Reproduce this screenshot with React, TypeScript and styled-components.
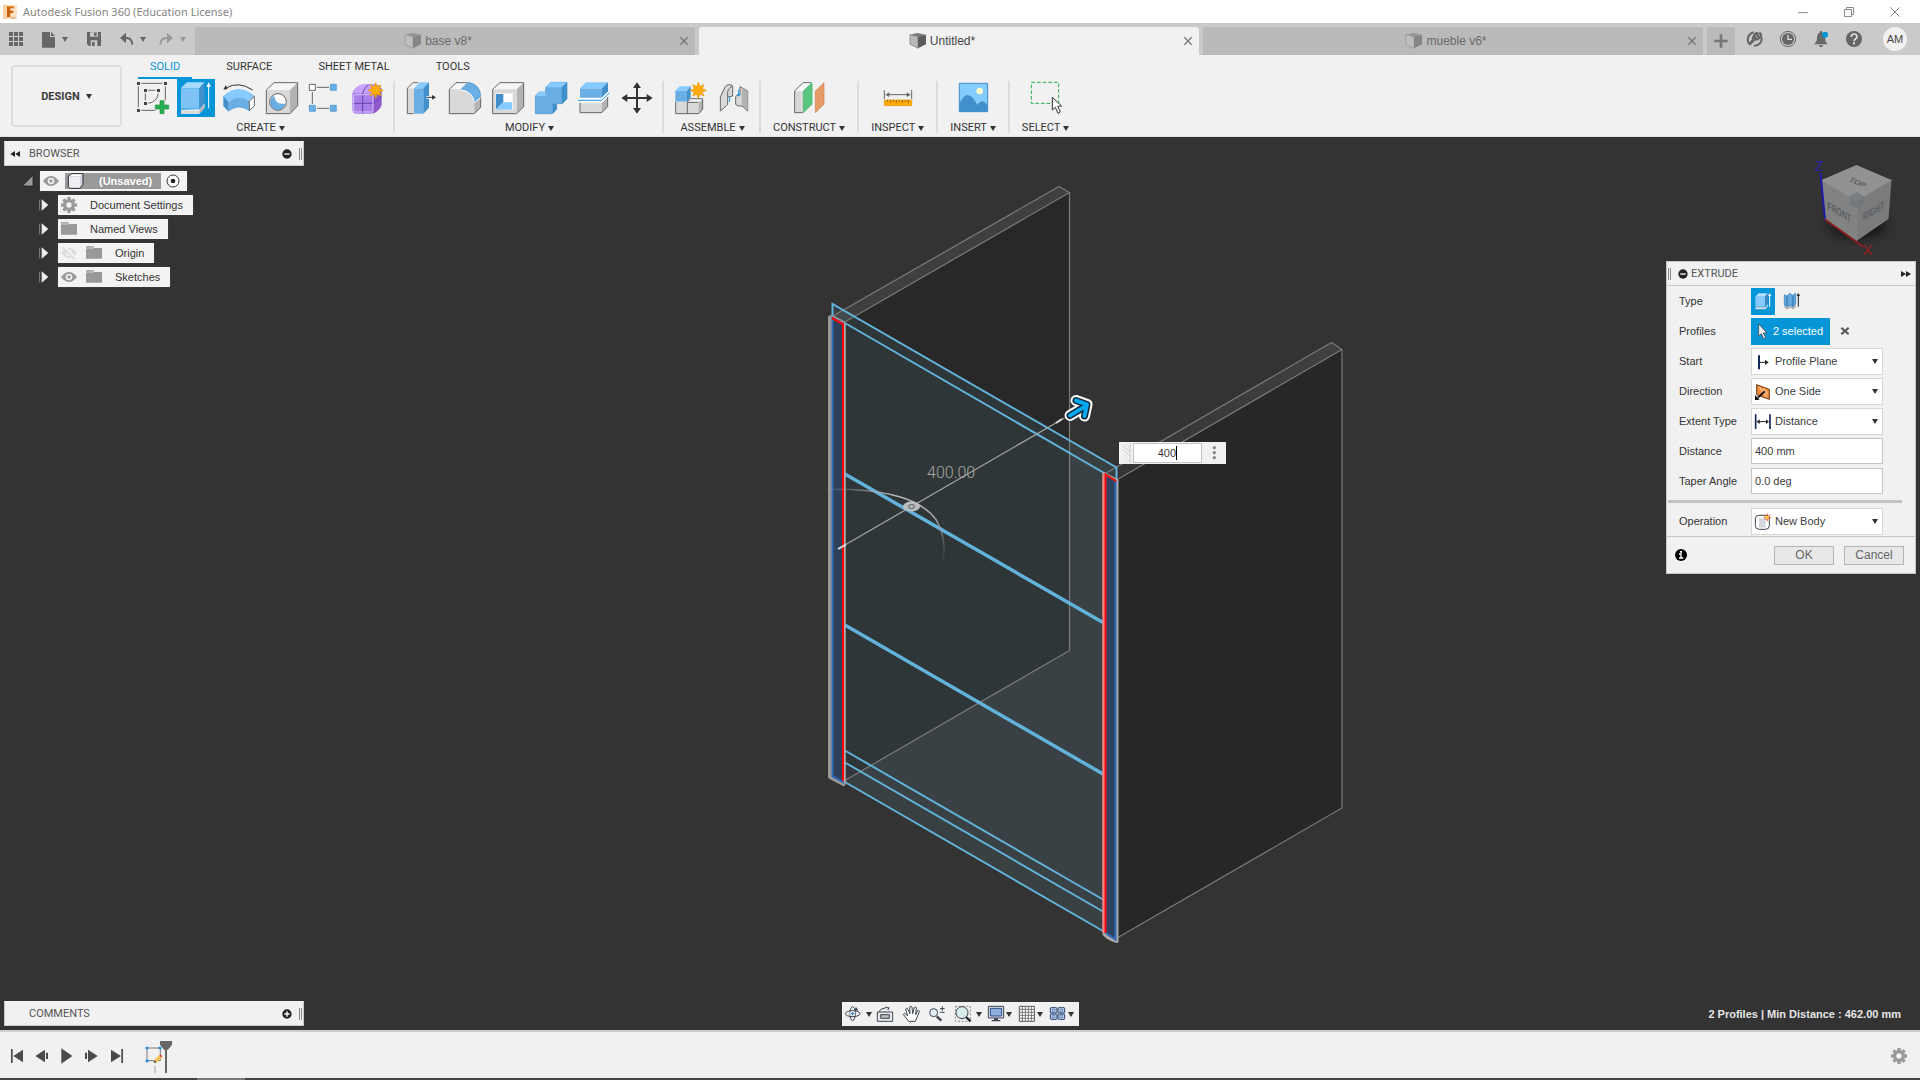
import React, { useState } from "react";
import styled, { createGlobalStyle } from "styled-components";

const SANS = '"Liberation Sans", Arial, sans-serif';
const CAPS = 'Roboto, "Liberation Sans", sans-serif';

const BLUE = "#0696d7";
const INK = "#3c3c3c";

const GlobalStyle = createGlobalStyle`
  * { box-sizing: border-box; }
  html, body { margin: 0; height: 100%; background: #333; }
  body { font: 11px/16px ${SANS}; color: ${INK}; }
  button, input, select { font: inherit; color: inherit; }
  button { border: 0; padding: 0; background: none; display: inline-flex; align-items: center; justify-content: center; }
  svg { display: block; flex: none; }
  input:focus, select:focus { outline: none; }
`;

const Shell = styled.div`
  display: flex;
  flex-direction: column;
  min-height: 100vh;
`;

/* ---------- icon helpers: drawings use three units per pixel ---------- */

type Box = [number, number, number, number];

function Art({ box, children }: { box: Box; children: React.ReactNode }) {
  return (
    <svg width={box[2] / 3} height={box[3] / 3} viewBox={box.join(" ")} fill="none" aria-hidden="true">
      {children}
    </svg>
  );
}

function Star({ x, y, r }: { x: number; y: number; r: number }) {
  const pts = Array.from({ length: 16 }, (_, i) => {
    const a = (Math.PI * i) / 8;
    const d = i % 2 ? r * 0.52 : r;
    return `${(x + d * Math.sin(a)).toFixed(1)},${(y - d * Math.cos(a)).toFixed(1)}`;
  }).join(" ");
  return <polygon points={pts} fill="#ffab00" stroke="#e39400" strokeWidth="2" />;
}

const Caret = styled.span<{ $tone?: string }>`
  flex: none;
  width: 0;
  height: 0;
  border: 3px solid transparent;
  border-top: 5px solid ${(p) => p.$tone || "#333"};
  border-bottom: 0;
`;

const Q = "#666";

/* ---------- title bar ---------- */

const TitleBar = styled.header`
  display: flex;
  align-items: center;
  height: 23px;
  background: #fff;
  padding: 0 2px;
`;
const TitleText = styled.h1`
  flex: 1;
  margin: 0 0 0 5px;
  font: 400 11px/22px "Noto Sans", "Open Sans", sans-serif;
  color: #858585;
`;
const WindowButton = styled.button`
  width: 46px;
  height: 20px;
`;

/* ---------- document tabs ---------- */

const DocBar = styled.nav`
  display: flex;
  height: 32px;
  background: #cacaca;
`;
const QuickAccess = styled.div`
  display: flex;
  align-items: center;
  width: 195px;
  padding-left: 8px;
`;
const QuickButton = styled.button<{ $lead?: number }>`
  gap: 6px;
  margin-left: ${(p) => p.$lead || 0}px;
`;
const Tabs = styled.div`
  flex: 1;
  display: flex;
  gap: 4px;
  padding-top: 4px;
`;
const Tab = styled.div<{ $active?: boolean }>`
  flex: 1;
  display: flex;
  align-items: center;
  padding: 0 4px;
  border-radius: 3px 3px 0 0;
  background: ${(p) => (p.$active ? "#f1f1f1" : "#bababa")};
  color: ${(p) => (p.$active ? "#444" : "#6a6a6a")};
`;
const TabTitle = styled.button`
  flex: 1;
  gap: 3px;
  font-size: 12px;
  line-height: 28px;
`;
const TabClose = styled.button`
  width: 14px;
  height: 28px;
`;
const AddTab = styled.button`
  width: 28px;
  margin: 4px 0 0 4px;
  border-radius: 3px 3px 0 0;
  background: #bababa;
`;
const Account = styled.div`
  display: flex;
  align-items: center;
  gap: 15px;
  padding: 0 13px 0 11px;
`;
const Avatar = styled.button`
  width: 24px;
  height: 24px;
  margin-left: 5px;
  border-radius: 50%;
  background: #f1f1f1;
  color: #444;
`;

/* ---------- ribbon ---------- */

const Ribbon = styled.section`
  display: flex;
  height: 82px;
  background: #f1f1f1;
  border-bottom: 1px solid #dfe3e3;
`;
const Workspace = styled.button`
  width: 111px;
  height: 62px;
  margin: 10px 12px 0 11px;
  padding-top: 1px;
  gap: 6px;
  border: 2px solid #dedede;
  border-radius: 4px;
  font: 700 11px/16px ${CAPS};
`;
const RibbonBody = styled.div`
  flex: 1;
  display: flex;
  flex-direction: column;
`;
const RibbonTabs = styled.div`
  display: flex;
  gap: 22px;
  height: 24px;
  padding-left: 4px;
`;
const RibbonTab = styled.button<{ $active?: boolean }>`
  padding: 2px 12px 0;
  font: 11px/20px ${CAPS};
  border-bottom: 2px solid ${(p) => (p.$active ? BLUE : "transparent")};
  color: ${(p) => (p.$active ? BLUE : "#333")};
`;
const Groups = styled.div`
  display: flex;
`;
const Group = styled.div<{ $tight?: boolean }>`
  display: flex;
  flex-direction: column;
  align-items: center;
  padding: ${(p) => (p.$tight ? "0 14px 0 12px" : "0 8px")};
  &:first-child { padding-left: 0; }
  background: linear-gradient(#dcdcdc, #dcdcdc) right 2px / 2px 52px no-repeat;
  &:last-child { background: none; }
`;
const Tools = styled.div`
  display: flex;
  gap: 5px;
`;
const Tool = styled.button<{ $on?: boolean }>`
  width: 38px;
  height: 38px;
  background: ${(p) => (p.$on ? BLUE : "none")};
`;
const GroupMenu = styled.button`
  gap: 3px;
  padding-top: 3px;
  font: 11px/16px ${CAPS};
  color: #333;
`;

const L = "#86caff";
const M = "#69afe5";
const D = "#4190cc";
const G = "#d9d9d9";
const S = "#b3b3b3";
const E = "#666";

interface ToolDef { name: string; on?: boolean; x: number; art: React.ReactNode }
interface GroupDef { name: string; tight?: boolean; tools: ToolDef[] }

const GROUPS: GroupDef[] = [
  {
    name: "CREATE",
    tools: [
      { name: "Create Sketch", x: 402, art: (
        <>
          <path d="M424 250h63M415 259v63M496 259v42M424 331h42M445 271h21M436 280v21M475 280q-4 26-30 30" stroke={E} strokeWidth="3" />
          <path d="M411 246h9v9h-9zM492 246h9v9h-9zM411 327h9v9h-9zM432 267h9v9h-9zM471 267h9v9h-9zM432 306h9v9h-9z" fill="#444" />
          <path d="M480 302h12v13h14v12h-14v14h-12v-14h-14v-12h14z" fill="#27ae51" stroke="#1e9443" strokeWidth="2" />
        </>) },
      { name: "Extrude", on: true, x: 531, art: (
        <>
          <path d="M543 329v12h55l16-18v-13l-16 18z" fill="#fff" />
          <path d="M598 329l16-18v12l-16 18z" fill={S} />
          <path d="M543 331h55v10h-55z" fill={G} />
          <path d="M543 265h55v61h-55z" fill="#7fc2f5" />
          <path d="M543 265l17-18h54l-16 18z" fill="#a5dbff" />
          <path d="M598 265l16-18v62l-16 17z" fill={D} />
          <path d="M626 325v-68" stroke="#fff" strokeWidth="3" />
          <path d="M626 247l7 13h-14z" fill="#fff" />
        </>) },
      { name: "Revolve", x: 660, art: (
        <>
          <path d="M670 288q45-42 94 0l-16 15q-31-22-62 3z" fill={L} />
          <path d="M670 288l16 18v29l-16-17z" fill={D} />
          <path d="M686 306q31-25 62-3v30q-31-22-62 2z" fill={M} />
          <path d="M748 303l15-14v29l-15 14z" fill="#fff" stroke={E} strokeWidth="3" />
          <path d="M678 264q38-22 80 6" stroke="#333" strokeWidth="3" />
          <path d="M670 269l7-13 6 11z" fill="#333" />
        </>) },
      { name: "Hole", x: 789, art: (
        <>
          <path d="M799 270l23-22h71l-23 22z" fill="#f6f6f6" />
          <path d="M870 270l23-22v69l-23 24z" fill={S} />
          <path d="M799 270h71v71h-71z" fill={G} />
          <path d="M799 270l23-22h71v69l-23 24h-71z" stroke={E} strokeWidth="3" />
          <circle cx="834" cy="306" r="25" fill="#fff" stroke={E} strokeWidth="3" />
          <path d="M823 289a21 21 0 1 0 31 22q-28 4-31-22z" fill={M} />
          <path d="M823 289a21 21 0 1 0 31 22" stroke={D} strokeWidth="2" />
        </>) },
      { name: "Pattern", x: 918, art: (
        <>
          <path d="M951 262h36M937 276v36M951 325h36" stroke={E} strokeWidth="3" />
          <path d="M928 253h18v18h-18z" fill="#fff" stroke={E} strokeWidth="3" />
          <path d="M991 253h18v18h-18zM928 316h18v18h-18zM991 316h18v18h-18z" fill={M} stroke={D} strokeWidth="2" />
        </>) },
      { name: "Create Form", x: 1047, art: (
        <>
          <path d="M1057 285q0-14 14-24 10-8 24-8h30q20 2 20 22v38q0 8-8 15-12 13-24 13h-44q-12 0-12-14z" fill="#a87ee9" />
          <path d="M1059 278q6-14 18-20 6-5 16-5h30q12 1 18 10l-22 17h-40z" fill="#c9a2fb" />
          <path d="M1120 280l24-16v50q-2 14-24 27z" fill="#8f5acb" />
          <path d="M1058 310h62l24-20M1088 280v61M1088 280q4-16 18-26" stroke="#6a3fae" strokeWidth="3" />
          <path d="M1066 284h48q5 0 5 5v42q0 5-5 5h-48q-5 0-5-5v-42q0-5 5-5z" stroke="#d7c0f8" strokeWidth="3" />
          <Star x={1127} y={271} r={23} />
        </>) },
    ],
  },
  {
    name: "MODIFY",
    tools: [
      { name: "Press Pull", x: 69, art: (
        <>
          <path d="M82 265l17-17h18l-15 17v76h-20z" fill="#f6f6f6" />
          <path d="M82 265h20v76h-20z" fill={G} />
          <path d="M100 341h-18v-76l17-17h16" stroke={E} strokeWidth="3" />
          <path d="M102 265h28v76h-28z" fill={M} />
          <path d="M102 265l17-18h28l-17 18z" fill={L} />
          <path d="M130 265l17-18v76l-17 18z" fill={D} />
          <path d="M139 292h21" stroke="#fff" strokeWidth="8" />
          <path d="M139 292h21" stroke="#333" strokeWidth="3" />
          <path d="M168 292l-12 7v-14z" fill="#333" />
        </>) },
      { name: "Fillet", x: 198, art: (
        <>
          <path d="M208 268l20-20h34l-20 20z" fill="#f6f6f6" />
          <path d="M208 268h34q38 4 41 40v33h-75z" fill={G} />
          <path d="M283 308l19-16v30l-19 19z" fill={S} />
          <path d="M244 267l21-20q36 6 37 43l-19 17q-3-34-39-40z" fill={M} stroke={D} strokeWidth="2" />
          <path d="M262 248h-34l-20 20v73h75l19-19v-30" stroke={E} strokeWidth="3" />
          <path d="M242 270q38 4 41 38l19-15" stroke="#fff" strokeWidth="3" />
        </>) },
      { name: "Shell", x: 327, art: (
        <>
          <path d="M338 268l22-20h71l-21 20z" fill="#f6f6f6" />
          <path d="M410 268l21-20v72l-21 21z" fill={S} />
          <path d="M338 268h72v73h-72z" fill={G} />
          <path d="M338 268l22-20h71v72l-21 21h-72z" stroke={E} strokeWidth="3" />
          <path d="M347 280h51v50h-51z" fill="#fff" />
          <path d="M348 282h22v25l-22 21z" fill={D} />
          <path d="M348 329l22-22h26v22z" fill={L} />
        </>) },
      { name: "Combine", x: 456, art: (
        <>
          <path d="M466 288l12-12h19v-14l15-15h49v49l-14 15h-17v17l-13 13h-51z" fill={M} stroke={D} strokeWidth="2" />
          <path d="M466 288l12-12h19v12zM497 262l15-15h49l-16 15z" fill={L} />
          <path d="M545 262l16-15v49l-14 15h-2zM518 311h12v17l-12 13z" fill={D} />
        </>) },
      { name: "Split Body", x: 585, art: (
        <>
          <path d="M600 265h65v28h-65z" fill={M} />
          <path d="M600 265l18-18h66l-19 18z" fill={L} />
          <path d="M665 265l19-18v27l-19 19z" fill={D} />
          <path d="M600 310h65v28h-65z" fill={G} />
          <path d="M665 310l18-18v28l-18 18z" fill={S} />
          <path d="M600 308v30h65l18-18v-30" stroke={E} strokeWidth="3" />
          <path d="M594 301h71l24-23" stroke="#fff" strokeWidth="10" />
          <path d="M594 301h71l24-23" stroke="#1b94ea" strokeWidth="3" />
        </>) },
      { name: "Move", x: 714, art: (
        <path d="M771 247l12 17h-9v27h26v-9l18 12-18 12v-9h-26v27h9l-12 17-12-17h9v-27h-26v9l-18-12 18-12v9h26v-27h-9z" fill="#333" />
      ) },
    ],
  },
  {
    name: "ASSEMBLE",
    tools: [
      { name: "New Component", x: 876, art: (
        <>
          <path d="M887 307h69v34h-69z" fill={G} />
          <path d="M922 306l10-10h36l-12 12z" fill="#f6f6f6" />
          <path d="M956 308l12-12v32l-12 13z" fill={S} />
          <path d="M887 306v35h69l12-13v-32h-36l-10 10v35M922 307h34" stroke={E} strokeWidth="3" />
          <path d="M886 272h35v33h-35z" fill={M} />
          <path d="M886 272l13-13h33l-11 13z" fill={L} />
          <path d="M921 272l11-13v33l-11 13z" fill={D} />
          <Star x={955} y={271} r={24} />
        </>) },
      { name: "Joint", x: 1005, art: (
        <>
          <path d="M1021 291l15-32q8-8 19-4 4 3 3 10v23l-11 3-4-2v25l-22 19z" fill={G} stroke={E} strokeWidth="3" />
          <path d="M1043 289v-15q4-10 14-16" stroke={E} strokeWidth="3" />
          <path d="M1103 333l-17-15q-18 1-19-6v-22q3-7 13-6v-24l23 13z" fill={G} stroke={E} strokeWidth="3" />
          <path d="M1085 262v54l18 15v-56z" fill={S} />
          <path d="M1049 306v-16M1076 268v18" stroke="#1b94ea" strokeWidth="3" />
          <path d="M1076 290l-6-8h12z" fill="#1b94ea" />
        </>) },
    ],
  },
  {
    name: "CONSTRUCT",
    tight: true,
    tools: [
      { name: "Offset Plane", x: 1233, art: (
        <>
          <path d="M1247 273l25-25h26l-25 25z" fill="#fafafa" />
          <path d="M1247 273h26v65h-26z" fill={G} />
          <path d="M1271 338h-24v-65l25-25h24" stroke={E} strokeWidth="3" />
          <path d="M1273 273l26-25v65l-26 25z" fill="#59c67f" stroke="#42ae68" strokeWidth="2" />
          <path d="M1309 273l26-25v65l-26 25z" fill="#e69a66" stroke="#cf8350" strokeWidth="2" />
        </>) },
    ],
  },
  {
    name: "INSPECT",
    tight: true,
    tools: [
      { name: "Measure", x: 360, art: (
        <>
          <path d="M376 270v27M458 270v27M384 284h66" stroke={E} strokeWidth="3" />
          <path d="M379 284l12-7v14zM455 284l-12-7v14z" fill={E} />
          <path d="M376 300h82v17h-82z" fill="#ffab00" stroke="#e69500" strokeWidth="2" />
          <path d="M385 301v4M394 301v7M403 301v4M412 301v7M421 301v4M430 301v7M439 301v4M448 301v7" stroke="#7a5200" strokeWidth="3" />
        </>) },
    ],
  },
  {
    name: "INSERT",
    tight: true,
    tools: [
      { name: "Insert Image", x: 579, art: (
        <>
          <path d="M595 250h85v85h-85z" fill="#84ccff" stroke={D} strokeWidth="3" />
          <path d="M595 310q14-25 25-25 14 0 29 30 8-12 17-11 6 1 14 14v17h-85z" fill={D} />
          <circle cx="656" cy="273" r="10" fill="#fdfbd0" />
        </>) },
    ],
  },
  {
    name: "SELECT",
    tight: true,
    tools: [
      { name: "Select", x: 795, art: (
        <>
          <path d="M808 247h82v63h-82z" stroke="#27ae51" strokeWidth="3" strokeDasharray="11 6" />
          <path d="M871 292v38l9-8 8 18 7-4-8-17 12-1z" fill="#fff" stroke="#333" strokeWidth="3" />
        </>) },
    ],
  },
];

/* ---------- viewport ---------- */

const Viewport = styled.main`
  position: relative;
  flex: 1;
  display: flex;
  justify-content: space-between;
  background: #333;
  padding: 4px;
  overflow: hidden;
`;
const Canvas = styled.div`
  position: absolute;
  inset: 0;
  display: flex;
  align-items: center;
  justify-content: center;
`;
const Column = styled.div<{ $end?: boolean }>`
  position: relative;
  display: flex;
  flex-direction: column;
  flex: 1 1 0;
  align-items: ${(p) => (p.$end ? "flex-end" : "flex-start")};
`;
const Spacer = styled.div`
  flex: 1;
`;
const Dock = styled.div`
  display: flex;
  align-items: center;
  width: 300px;
  height: 25px;
  padding: 0 1px 0 4px;
  background: #f1f1f1;
  border: 1px solid #c9c9c9;
  border-top-color: #f1f1f1;
`;
const DockFold = styled.button`
  width: 12px;
  height: 20px;
`;
const DockTitle = styled.h2`
  flex: 1;
  margin: 0 0 0 8px;
  font: 400 11px/20px ${CAPS};
  color: #555;
`;
const Grip = styled.span`
  width: 3px;
  height: 12px;
  margin-left: 7px;
  border: 1px solid #888;
  border-width: 0 1px;
`;
const Tree = styled.ul`
  list-style: none;
  margin: 5px 0 0;
  padding: 0;
  display: grid;
  gap: 4px;
`;
const Node = styled.li<{ $depth: number }>`
  display: flex;
  align-items: center;
  gap: ${(p) => (p.$depth ? 8 : 6)}px;
  padding-left: ${(p) => (p.$depth ? 35 : 17)}px;
`;
const NodeBox = styled.div<{ $root?: boolean }>`
  display: flex;
  align-items: center;
  gap: ${(p) => (p.$root ? 5 : 7)}px;
  height: 20px;
  padding: 0 ${(p) => (p.$root ? 7 : 10)}px 0 2px;
  background: #f3f3f3;
  box-shadow: 0 0 3px #444;
`;
const NodeName = styled.span`
  padding-left: 5px;
  line-height: 20px;
  color: #333;
`;
const RootName = styled.span`
  display: flex;
  align-items: center;
  gap: 14px;
  height: 16px;
  padding: 0 9px 0 2px;
  background: #999;
  color: #fff;
  font-weight: 700;
`;
const NavBar = styled.div`
  position: relative;
  align-self: flex-end;
  display: flex;
  align-items: center;
  height: 24px;
  padding: 0 4px 0 2px;
  background: #f1f1f1;
`;
const NavButton = styled.button<{ $lead?: number; $gap?: number }>`
  gap: ${(p) => p.$gap || 0}px;
  margin-left: ${(p) => p.$lead || 0}px;
`;
const NavCaret = styled(Caret)`
  margin: 0 1px;
`;
const CubeSlot = styled.div`
  height: 120px;
  padding: 14px 13px 0 0;
`;
const StatusText = styled.p`
  margin: 0;
  padding: 0 15px 0 0;
  font-weight: 700;
  line-height: 24px;
  color: #e6e6e6;
`;
const FloatingInput = styled.div`
  position: absolute;
  left: calc(50% + 159px);
  top: calc(50% - 142px);
  display: flex;
  align-items: center;
  width: 107px;
  height: 22px;
  padding-left: 4px;
  background: #f1f1f1;
`;
const Stripes = styled.span`
  width: 8px;
  height: 20px;
  border-right: 2px solid #ddd;
  background: repeating-linear-gradient(45deg, #ddd 0 1px, #f1f1f1 1px 3px);
`;
const ValueShell = styled.div`
  display: flex;
  align-items: center;
  width: 69px;
  height: 20px;
  margin: 0 10px 0 2px;
  background: #fff;
  border: 1px solid #c2c2c2;
`;
const ValueInput = styled.input`
  width: 42px;
  padding: 0;
  border: 0;
  text-align: right;
  background: none;
`;
const TextCursor = styled.span`
  width: 1px;
  height: 14px;
  background: #000;
`;

/* ---------- extrude panel ---------- */

const Panel = styled.form`
  width: 250px;
  background: #f1f1f1;
  border: 1px solid #c6c6c6;
`;
const PanelHead = styled.div`
  display: flex;
  align-items: center;
  height: 24px;
  padding: 0 3px 0 1px;
  border-bottom: 1px solid #c6c6c6;
`;
const PanelGrip = styled(Grip)`
  margin: 0 7px 0 0;
`;
const PanelTitle = styled.h2`
  flex: 1;
  margin: 0 0 0 3px;
  font: 400 11px/22px ${CAPS};
  color: #555;
`;
const Row = styled.div`
  display: grid;
  grid-template-columns: 72px 132px;
  align-items: center;
  height: 30px;
  padding-left: 12px;
`;
const RowLabel = styled.label`
  color: #333;
`;
const Inline = styled.div`
  display: flex;
  align-items: center;
`;
const TypeButton = styled.button<{ $on?: boolean }>`
  width: 24px;
  height: 27px;
  margin-right: 5px;
  background: ${(p) => (p.$on ? BLUE : "none")};
`;
const Selection = styled.button`
  width: 79px;
  height: 27px;
  gap: 4px;
  margin-right: 8px;
  background: ${BLUE};
  color: #fff;
`;
const Field = styled.div`
  position: relative;
  height: 27px;
`;
const FieldIcon = styled.span`
  position: absolute;
  left: 3px;
  top: 5px;
  pointer-events: none;
`;
const FieldCaret = styled(Caret)`
  position: absolute;
  right: 5px;
  top: 11px;
  pointer-events: none;
`;
const Select = styled.select`
  appearance: none;
  width: 100%;
  height: 27px;
  padding: 0 16px 0 23px;
  border: 1px solid #d6d6d6;
  border-radius: 0;
  background: #fff;
`;
const TextField = styled.input`
  width: 100%;
  height: 26px;
  padding: 0 3px;
  border: 1px solid #c4c4c4;
  background: #fff;
`;
const Divider = styled.hr`
  margin: 4px 13px 3px 1px;
  height: 3px;
  border: 0;
  background: #c4c4c4;
`;
const PanelFoot = styled.div`
  display: flex;
  align-items: center;
  gap: 10px;
  height: 37px;
  padding: 0 11px 0 8px;
  border-top: 1px solid #c6c6c6;
`;
const FootButton = styled.button`
  width: 60px;
  height: 19px;
  border: 1px solid #b4b4b4;
  background: #e8e8e8;
  font-size: 12px;
  color: #666;
`;

/* ---------- timeline ---------- */

const Timeline = styled.footer`
  display: flex;
  align-items: center;
  height: 48px;
  padding: 2px 12px 0 4px;
  border-top: 2px solid #cdcdcd;
  background: #f1f1f1;
`;
const PlayButton = styled.button`
  width: 25px;
  height: 24px;
`;
const Feature = styled.button`
  margin: 2px auto 0 16px;
`;
const Edge = styled.div`
  height: 2px;
  background: linear-gradient(90deg, #444 197px, #777 197px 245px, #444 245px);
`;

/* ---------- small icons ---------- */

const DocCube = ({ dim }: { dim?: boolean }) => (
  <Art box={[441, 96, 54, 54]}>
    <g opacity={dim ? 0.55 : 1}>
      <path d="M444 104l22-5 26 5-24 6z" fill="#777" />
      <path d="M444 104l24 6v35l-24-12z" fill={dim ? "#c4c4c4" : "#b9b9b9"} stroke="#777" strokeWidth="2" />
      <path d="M468 110l24-6v29l-24 12z" fill="#5c5c5c" />
    </g>
  </Art>
);
const CloseGlyph = ({ tone = "#777" }: { tone?: string }) => (
  <Art box={[0, 0, 30, 30]}><path d="M4 4l22 22M26 4L4 26" stroke={tone} strokeWidth="4" /></Art>
);
const Folder = () => (
  <Art box={[180, 273, 54, 54]}><path d="M183 280h22l3 5h23v32h-48z" fill="#999" /><path d="M183 285h24" stroke="#f1f1f1" strokeWidth="2" /></Art>
);
const Eye = ({ off }: { off?: boolean }) => (
  <Art box={[180, 414, 54, 54]}>
    <g opacity={off ? 0.25 : 1}>
      <path d="M183 441q24-30 48 0-24 30-48 0z" fill="#999" />
      <circle cx="207" cy="441" r="10" fill="#f3f3f3" />
      <circle cx="207" cy="441" r="5" fill="#999" />
      {off && <><path d="M190 422l38 36" stroke="#f3f3f3" strokeWidth="10" /><path d="M187 424l38 36" stroke="#888" strokeWidth="4" /></>}
    </g>
  </Art>
);
const Gear = () => (
  <Art box={[-27, -27, 54, 54]}>
    {[0, 45, 90, 135].map((a) => (
      <path key={a} d="M-5-24H5V24H-5z" fill="#999" transform={`rotate(${a})`} />
    ))}
    <circle r="18" fill="#999" />
    <circle r="8" fill="#f3f3f3" />
  </Art>
);
const Dot = ({ sign }: { sign: "plus" | "minus" }) => (
  <Art box={[-15, -15, 30, 30]}>
    <circle r="14" fill="#222" />
    <path d={sign === "plus" ? "M-8 0H8M0-8V8" : "M-8 0H8"} stroke="#fff" strokeWidth="4" />
  </Art>
);
const Expander = () => (
  <Art box={[117, 204, 33, 42]}><path d="M119 209v32" stroke="#888" strokeWidth="3" /><path d="M125 208v34l20-17z" fill="#eee" /></Art>
);

function Quick() {
  return (
    <QuickAccess>
      <QuickButton aria-label="Data panel">
        <Art box={[24, 93, 48, 48]}>
          {[27, 42, 57].map((x) => [96, 111, 126].map((y) => <rect key={`${x}-${y}`} x={x} y={y} width="12" height="12" fill={Q} />))}
        </Art>
      </QuickButton>
      <QuickButton $lead={17} aria-label="File">
        <Art box={[123, 90, 45, 51]}><path d="M126 93h24v15h15v32h-39z" fill={Q} /><path d="M153 92l12 13h-12z" fill={Q} /></Art>
        <Caret $tone={Q} />
      </QuickButton>
      <QuickButton $lead={18} aria-label="Save">
        <Art box={[258, 93, 48, 48]}>
          <path d="M261 96h42v42h-36l-6-6z" fill={Q} />
          <path d="M270 97h24v13h-24zM272 121h20v17h-20z" fill="#cacaca" />
          <path d="M282 98h8v9h-8zM276 126h8v12h-8z" fill={Q} />
        </Art>
      </QuickButton>
      <QuickButton $lead={17} aria-label="Undo">
        <Art box={[357, 96, 45, 42]}><path d="M366 114h14q16 1 17 20" stroke={Q} strokeWidth="6" /><path d="M360 114l18-16v32z" fill={Q} /></Art>
        <Caret $tone={Q} />
      </QuickButton>
      <QuickButton $lead={13} aria-label="Redo">
        <Art box={[477, 96, 45, 42]}><path d="M512 114h-14q-16 1-17 20" stroke="#999" strokeWidth="6" /><path d="M519 114l-18-16v32z" fill="#999" /></Art>
        <Caret $tone="#999" />
      </QuickButton>
    </QuickAccess>
  );
}

const DOCS = ["base v8*", "Untitled*", "mueble v6*"];

function Model() {
  const edge = { stroke: "#7a7a7a", strokeWidth: 1.2 };
  const thin = { stroke: "#62b3db", strokeWidth: 2 };
  return (
    <svg width="1920" height="893" viewBox="0 137 1920 893" fill="none" role="img" aria-label="Model canvas">
      <defs>
        <linearGradient id="arcFade" x1="820" y1="489" x2="942" y2="560" gradientUnits="userSpaceOnUse">
          <stop offset="0" stopColor="#999" stopOpacity="0" />
          <stop offset="0.5" stopColor="#bbb" />
          <stop offset="0.8" stopColor="#aaa" />
          <stop offset="1" stopColor="#999" stopOpacity="0.1" />
        </linearGradient>
        <linearGradient id="topEdge" x1="1342" y1="342" x2="1106" y2="480" gradientUnits="userSpaceOnUse">
          <stop offset="0" stopColor="#414141" />
          <stop offset="1" stopColor="#333" />
        </linearGradient>
      </defs>
      <path d="M1069.5 192.5L844 322.5V781l225.5-130.5z" fill="#282828" />
      <path d="M1059 186.5l10.5 6L844 322.5 832 316.5z" fill="#3f3f3f" />
      <path d="M1116.5 480l226-130.5V808L1116.5 938z" fill="#272727" />
      <path d="M1331.5 342.5l11 7L1116.5 480 1105.5 473.5z" fill="url(#topEdge)" />
      <path d="M832.5 304L1116.5 467.5V480L1103 473.5V931L844 781.5V322.5L832.5 316.5z" fill="#6ab0b8" fillOpacity="0.11" />
      <path d="M1069.5 452.5l33.5 19.5v440L844 762V781L1069.5 650.5z" fill="#8090ff" fillOpacity="0.02" />
      <path d="M1069.5 192.5L844 322.5M1059 186.5l10.5 6V650.5L844 781M1059 186.5L832 316.5" {...edge} />
      <path d="M1342 349.5L1116.5 480M1331.5 342.5l10.5 7V808L1117 938M1331.5 342.5L1105.5 473.5" {...edge} />
      <path d="M832.5 317V304L1116.5 467.5V480M844 322.5L1105 473.5M844 750l259 149.5M844 762l259 149.5M844 781.5L1103 931" {...thin} />
      <path d="M844 473.5L1103 622.5M844 624.5L1103 774" stroke="#62b3db" strokeWidth="3.5" />
      <path d="M830 317.5V777L843.5 784V323L832 317z" stroke="#999" strokeWidth="4" strokeLinejoin="round" />
      <path d="M832.5 318V776.5L843 782V323.5z" fill="#2e425d" stroke="#2f69b9" strokeWidth="2" />
      <path d="M844.5 324V782" stroke="#b5b0b0" strokeWidth="2" />
      <path d="M841 325V779" stroke="#2e425d" strokeWidth="2" />
      <path d="M832 318l11 6V781" stroke="#f00" strokeWidth="2" />
      <path d="M1104 473.5V934q4 5 13 7.5V480.5z" stroke="#aaa" strokeWidth="3" strokeLinejoin="round" />
      <path d="M1106 475V933l9.5 6.5V481z" fill="#2e425d" stroke="#2f69b9" strokeWidth="2" />
      <path d="M1107.5 478V932" stroke="#2e425d" strokeWidth="2" />
      <path d="M1103.5 474V933" stroke="#ff8080" strokeWidth="2" />
      <path d="M1116 481l-10.5-6.5V933" stroke="#f00" strokeWidth="2" />
      <path d="M838 549l226.5-131" stroke="#a6a6a6" strokeWidth="1.2" />
      <path d="M838 549l8-4.5M1056 423l6-4" stroke="#ddd" strokeWidth="2" />
      <path d="M820 489.5q92-3 116 30 11 19 7 41" stroke="url(#arcFade)" strokeWidth="1.5" />
      <ellipse cx="911.5" cy="506.5" rx="8.5" ry="5" fill="#b9bcbd" />
      <ellipse cx="911.5" cy="506.5" rx="3" ry="2" stroke="#555" />
      <text x="927" y="478" fill="#a6a6a6" fontSize="16" fontWeight="300" fontFamily='Roboto, "Liberation Sans", sans-serif'>400.00</text>
      {([["#fff", 11], ["#123", 7], ["#00a8ee", 4]] as [string, number][]).map(([c, w]) => (
        <path key={c} d="M1070 415.5l15-9M1076 400.5l11 4-2.5 11.5" stroke={c} strokeWidth={w} strokeLinecap="round" strokeLinejoin="round" />
      ))}
    </svg>
  );
}

function ViewCube() {
  return (
    <svg width="100" height="102" viewBox="1803 155 100 102" fill="none" role="img" aria-label="View cube">
      <defs>
        <radialGradient id="cubeShade"><stop offset="0.5" stopColor="#1c1c1c" /><stop offset="1" stopColor="#333" stopOpacity="0" /></radialGradient>
      </defs>
      <ellipse cx="1857" cy="224" rx="44" ry="25" fill="url(#cubeShade)" />
      <path d="M1856.5 165l35 15-35 21-35-21z" fill="#929292" />
      <path d="M1821.5 180l35 21v40l-31.5-22z" fill="#828282" />
      <path d="M1891.5 180l-35 21v40l32-22z" fill="#7b7b7b" />
      <path d="M1821.5 180l35 21 35-21M1856.5 201v40" stroke="#a0a0a0" strokeWidth="0.6" />
      <path d="M1849.5 196l7-4 7 4v8l-7 4-7-4z" fill="#6c7178" fillOpacity="0.6" />
      <g fill="#595e63" fontFamily='"Liberation Sans", sans-serif' fontSize="11" fontWeight="700">
        <text transform="matrix(.7 .3 -.5 .5 1848 181)">TOP</text>
        <text transform="matrix(.62 .36 0 1 1827.5 209)">FRONT</text>
        <text transform="matrix(.62 -.36 0 1 1863 221)">RIGHT</text>
      </g>
      <path d="M1820.5 173l4.5 46.5" stroke="#1c1ca5" strokeWidth="2" />
      <path d="M1825 219.5l38.5 27.5" stroke="#8c1c1c" strokeWidth="2" />
      <g fontFamily='"Liberation Sans", sans-serif' fontSize="14">
        <text x="1815" y="171" fill="#2424a8">Z</text>
        <text x="1863" y="255" fill="#a02020">X</text>
      </g>
    </svg>
  );
}

const icons = {
  start: <Art box={[342, 633, 54, 54]}><path d="M357 640v42" stroke="#12285a" strokeWidth="6" /><path d="M360 661h16" stroke="#222" strokeWidth="3" /><path d="M386 661l-11 8v-16z" fill="#222" /></Art>,
  side: <Art box={[342, 726, 54, 54]}><path d="M350 731l38 14v30l-38-14z" fill="#f08a3c" stroke="#6b3510" strokeWidth="3" /><path d="M358 738l22 30M370 742l14 18" stroke="#ffc48f" strokeWidth="4" /><path d="M374 751l-20 19" stroke="#000" strokeWidth="5" /><path d="M345 777v-15l14 14z" fill="#000" /></Art>,
  extent: <Art box={[342, 816, 54, 54]}><path d="M347 820v44M390 820v44" stroke="#12285a" strokeWidth="5" /><path d="M356 842h26" stroke="#222" strokeWidth="3" /><path d="M350 842l9-7v14zM387 842l-9-7v14z" fill="#222" /></Art>,
  body: <Art box={[342, 1116, 54, 54]}><path d="M346 1132q0-9 12-9h18q12 0 12 9v22q0 11-12 11h-18q-12 0-12-11z" fill="#fff" stroke="#3b4452" strokeWidth="3" /><path d="M357 1132h20v28h-20z" fill="#d3d8df" /><g transform="translate(382 1129)"><path d="M0-11V11M-11 0H11M-8-8L8 8M8-8L-8 8" stroke="#e0401c" strokeWidth="3" /><circle r="5" fill="#ffd830" /></g></Art>,
};

function Choice({ id, label, value, icon }: { id: string; label: string; value: string; icon: React.ReactNode }) {
  return (
    <Row>
      <RowLabel htmlFor={id}>{label}</RowLabel>
      <Field>
        <Select id={id} defaultValue={value}><option>{value}</option></Select>
        <FieldIcon>{icon}</FieldIcon>
        <FieldCaret />
      </Field>
    </Row>
  );
}

function ExtrudePanel() {
  const [distance, setDistance] = useState("400 mm");
  const [taper, setTaper] = useState("0.0 deg");
  return (
    <Panel onSubmit={(e) => e.preventDefault()}>
      <PanelHead>
        <PanelGrip />
        <Dot sign="minus" />
        <PanelTitle>EXTRUDE</PanelTitle>
        <Art box={[780, 390, 36, 24]}><path d="M783 393l15 9-15 9zM798 393l15 9-15 9z" fill="#222" /></Art>
      </PanelHead>
      <Row>
        <RowLabel as="span">Type</RowLabel>
        <Inline>
          <TypeButton type="button" $on aria-label="Extrude">
            <Art box={[342, 456, 54, 54]}>
              <path d="M346 502v6h30l8-10v-5l-8 9z" fill="#ddd" />
              <path d="M346 472q0-4 4-4h22q4 0 4 4v25q0 3-4 3h-22q-4 0-4-3z" fill="#85c8fa" />
              <path d="M348 468l8-8h28l-9 9z" fill="#b4e0ff" />
              <path d="M376 469l8-9v29l-8 10z" fill="#3c86c4" />
              <path d="M389 500v-34" stroke="#fff" strokeWidth="3" /><path d="M389 459l5 9h-10z" fill="#fff" />
            </Art>
          </TypeButton>
          <TypeButton type="button" aria-label="Thin extrude">
            <Art box={[429, 456, 54, 54]}>
              <path d="M433 464l8 4 8-8 8 6 10-6v32l-8 9-9-6-9 6-8-5z" fill="#62a9e0" stroke="#2f78b6" strokeWidth="2" />
              <path d="M441 468v31M459 468v31" stroke="#2c6ea8" strokeWidth="3" />
              <path d="M433 501l9 5 9-6 9 6 8-8" stroke="#aaa" strokeWidth="4" />
              <path d="M475 500v-34" stroke="#222" strokeWidth="3" /><path d="M475 459l5 9h-10z" fill="#222" />
            </Art>
          </TypeButton>
        </Inline>
      </Row>
      <Row>
        <RowLabel as="span">Profiles</RowLabel>
        <Inline>
          <Selection type="button">
            <Art box={[357, 549, 33, 48]}><path d="M359 552v36l8-7 7 15 6-3-7-14h11z" fill="#f2f2f2" stroke="#333" strokeWidth="2" /></Art>
            2 selected
          </Selection>
          <TabClose type="button" aria-label="Clear selection"><Art box={[0, 0, 30, 30]}><path d="M4 5l22 20M26 5L4 25" stroke="#555" strokeWidth="6" /></Art></TabClose>
        </Inline>
      </Row>
      <Choice id="start" label="Start" value="Profile Plane" icon={icons.start} />
      <Choice id="direction" label="Direction" value="One Side" icon={icons.side} />
      <Choice id="extent" label="Extent Type" value="Distance" icon={icons.extent} />
      <Row>
        <RowLabel htmlFor="distance">Distance</RowLabel>
        <TextField id="distance" value={distance} onChange={(e) => setDistance(e.target.value)} />
      </Row>
      <Row>
        <RowLabel htmlFor="taper">Taper Angle</RowLabel>
        <TextField id="taper" value={taper} onChange={(e) => setTaper(e.target.value)} />
      </Row>
      <Divider />
      <Choice id="operation" label="Operation" value="New Body" icon={icons.body} />
      <PanelFoot>
        <Art box={[-18, -18, 36, 36]}><circle r="18" fill="#000" /><path d="M-6-3H0V9M-6 9H7" stroke="#fff" strokeWidth="4" /><path d="M-3-12H3V-7H-3z" fill="#fff" /></Art>
        <Spacer />
        <FootButton type="submit">OK</FootButton>
        <FootButton type="button">Cancel</FootButton>
      </PanelFoot>
    </Panel>
  );
}

function BrowserTree() {
  return (
    <Tree>
      <Node $depth={0}>
        <Art box={[60, 135, 39, 36]}><path d="M96 136v32H64z" fill="#999" stroke="#111" strokeWidth="2" /></Art>
        <NodeBox $root>
          <Eye />
          <RootName>
            <Art box={[201, 129, 54, 48]}>
              <path d="M206 138l9-7h34l-8 8z" fill="#fff" /><path d="M205 139h35v35h-30l-5-4z" fill="#eceef2" /><path d="M240 139l9-8v32l-9 11z" fill="#d0d3da" />
              <path d="M205 139l10-8h34v32l-9 12h-30l-5-5z" stroke="#2b2f38" strokeWidth="3" />
            </Art>
            (Unsaved)
          </RootName>
          <Art box={[-21, -21, 42, 42]}><circle r="18" fill="#fff" stroke="#333" strokeWidth="3" /><circle r="7" fill="#222" /></Art>
        </NodeBox>
      </Node>
      <Node $depth={1}><Expander /><NodeBox><Gear /><NodeName>Document Settings</NodeName></NodeBox></Node>
      <Node $depth={1}><Expander /><NodeBox><Folder /><NodeName>Named Views</NodeName></NodeBox></Node>
      <Node $depth={1}><Expander /><NodeBox><Eye off /><Folder /><NodeName>Origin</NodeName></NodeBox></Node>
      <Node $depth={1}><Expander /><NodeBox><Eye /><Folder /><NodeName>Sketches</NodeName></NodeBox></Node>
    </Tree>
  );
}

const P = "#3d4450";

function Navigation() {
  return (
    <NavBar>
      <NavButton $gap={3} aria-label="Orbit">
        <Art box={[69, 45, 54, 54]}>
          <ellipse cx="95" cy="71" rx="22" ry="9" stroke={P} strokeWidth="3" />
          <ellipse cx="95" cy="71" rx="8" ry="21" stroke={P} strokeWidth="3" />
          <path d="M88 65h14v12h-14z" fill="#f1f1f1" />
          <path d="M95 66v10M90 71h10" stroke="#1b72c8" strokeWidth="3" /><path d="M99 63l13-2-7-10z" fill={P} />
        </Art>
        <NavCaret />
      </NavButton>
      <NavButton $lead={3} aria-label="Look at">
        <Art box={[168, 45, 54, 54]}>
          <path d="M172 66h46v28h-46z" fill="#e8eaee" stroke={P} strokeWidth="3" /><path d="M182 74h26v11h-26z" fill="#bbb" stroke={P} strokeWidth="3" />
          <path d="M176 65l10-9h8l2-5 12 3-5 3 3 4" stroke={P} strokeWidth="3" />
        </Art>
      </NavButton>
      <NavButton $lead={8} aria-label="Pan">
        <Art box={[246, 45, 54, 54]}>
          <path d="M266 94l-16-21q2-5 7-1l6 6-6-21q3-5 7 1l6 13-1-20q4-4 7 0l2 20 5-19q5-3 6 2l-2 20 6-12q5-2 5 3l-7 17-5 12z" fill="#fff" stroke={P} strokeWidth="3" strokeLinejoin="round" />
        </Art>
      </NavButton>
      <NavButton $lead={8} aria-label="Zoom">
        <Art box={[324, 45, 54, 54]}>
          <circle cx="341" cy="68" r="12" fill="#dfeef0" stroke={P} strokeWidth="3" /><path d="M350 79l14 13" stroke={P} strokeWidth="7" />
          <path d="M367 49v13M360 56h14M360 67h14" stroke={P} strokeWidth="3" />
        </Art>
      </NavButton>
      <NavButton $lead={8} $gap={3} aria-label="Zoom window">
        <Art box={[402, 45, 54, 54]}>
          <path d="M406 49h45v45h-45z" stroke="#888" strokeWidth="3" strokeDasharray="6 5" />
          <circle cx="426" cy="68" r="18" fill="#d9ecec" stroke={P} strokeWidth="3" /><path d="M438 81l14 13" stroke="#222" strokeWidth="7" />
        </Art>
        <NavCaret />
      </NavButton>
      <NavButton $lead={4} aria-label="Display settings">
        <Art box={[501, 45, 54, 54]}>
          <path d="M505 49h46v35h-46z" fill="#dfe5ee" stroke={P} strokeWidth="3" /><path d="M511 55h34v23h-34z" fill="#8fb0dc" stroke="#2c4c88" strokeWidth="3" />
          <path d="M522 85h12v5h7v4h-26v-4h7z" fill={P} />
        </Art>
        <NavCaret />
      </NavButton>
      <NavButton $lead={5} aria-label="Grid and snaps">
        <Art box={[594, 45, 54, 54]}>
          <path d="M598 49h45v45h-45z" fill="#fff" stroke="#555" strokeWidth="3" /><path d="M607 49v45M616 49v45M625 49v45M634 49v45M598 58h45M598 67h45M598 76h45M598 85h45" stroke="#777" strokeWidth="3" />
        </Art>
        <NavCaret />
      </NavButton>
      <NavButton $lead={5} aria-label="Viewports">
        <Art box={[687, 45, 54, 54]}>
          {[[691, 53], [714, 53], [691, 72], [714, 72]].map(([x, y]) => (
            <g key={`${x}${y}`}><rect x={x} y={y} width="20" height="16" rx="2" fill="#b8cdea" stroke="#2e436e" strokeWidth="3" /><rect x={x + 6} y={y + 5} width="8" height="6" stroke="#5b7db5" strokeWidth="2" /></g>
          ))}
        </Art>
        <NavCaret />
      </NavButton>
    </NavBar>
  );
}

const PLAY: [string, string][] = [
  ["Go to start", "M33 177h5v42h-5zM69 179v38L40 198z"],
  ["Step back", "M135 179v38l-29-19zM138 188h6v19h-6z"],
  ["Play", "M184 175v46l33-23z"],
  ["Step forward", "M255 188h6v19h-6zM264 179v38l29-19z"],
  ["Go to end", "M333 179v38l30-19zM364 177h5v42h-5z"],
];

export default function App() {
  const [value, setValue] = useState("400");
  return (
    <Shell>
      <GlobalStyle />
      <TitleBar>
        <Art box={[6, 9, 48, 48]}>
          <path d="M9 11h42v43H9z" fill="#fde2c8" /><path d="M9 11h12v43H9z" fill="#fbd0a6" />
          <path d="M21 15h21v7H31v7h9v7h-9v13H21z" fill="#c8640e" /><path d="M25 15h17v4H25z" fill="#f0913a" /><path d="M33 49h13v4H33z" fill="#e9a56a" />
        </Art>
        <TitleText>Autodesk Fusion 360 (Education License)</TitleText>
        <WindowButton aria-label="Minimize"><Art box={[0, 0, 30, 30]}><path d="M0 17h30" stroke="#888" strokeWidth="3" /></Art></WindowButton>
        <WindowButton aria-label="Restore"><Art box={[0, 0, 30, 30]}><path d="M1.5 7.5h21v21h-21zM7.5 7V1.5h21v21H23" stroke="#888" strokeWidth="3" /></Art></WindowButton>
        <WindowButton aria-label="Close"><Art box={[0, 0, 30, 30]}><path d="M1 1l28 28M29 1L1 29" stroke="#888" strokeWidth="3" /></Art></WindowButton>
      </TitleBar>
      <DocBar>
        <Quick />
        <Tabs>
          {DOCS.map((name, i) => (
            <Tab key={name} $active={i === 1}>
              <TabTitle><DocCube dim={i !== 1} />{name}</TabTitle>
              <TabClose aria-label={`Close ${name}`}><CloseGlyph /></TabClose>
            </Tab>
          ))}
        </Tabs>
        <AddTab aria-label="New design"><Art box={[0, 0, 42, 42]}><path d="M1 21h40M21 1v40" stroke="#777" strokeWidth="8" /></Art></AddTab>
        <Account>
          <button aria-label="Extensions">
            <Art box={[1038, 90, 54, 54]}>
              <path d="M1050 134a21 21 0 0 1-2-29q5-6 13-8M1084 110a21 21 0 0 1-22 27" stroke={Q} strokeWidth="6" />
              <path d="M1055 113l7-13 8-5 5 3 6-2 6 7-4 10-9 8-9 1-13 13-6-6 11-12z" fill={Q} /><path d="M1067 107l6 6M1075 102l5 5" stroke="#cacaca" strokeWidth="3" />
            </Art>
          </button>
          <button aria-label="Job status">
            <Art box={[1137, 90, 54, 54]}><circle cx="1164" cy="117" r="23" stroke={Q} strokeWidth="3" /><circle cx="1164" cy="117" r="18" fill={Q} /><path d="M1164 104v14h12" stroke="#ddd" strokeWidth="4" /></Art>
          </button>
          <button aria-label="Notifications">
            <Art box={[1236, 90, 54, 54]}><path d="M1242 133q9-7 9-19 0-14 8-16 0-6 4-6t4 6q8 3 8 16 0 12 8 19zM1256 136h14q-2 6-7 6t-7-6z" fill={Q} /><circle cx="1275" cy="104" r="9" fill={BLUE} /></Art>
          </button>
          <button aria-label="Help">
            <Art box={[1335, 90, 54, 54]}><circle cx="1362" cy="117" r="24" fill={Q} /><path d="M1354 111q0-9 8-9 9 0 9 8 0 4-5 7-4 3-4 7" stroke="#e0e0e0" strokeWidth="5" /><path d="M1359 127h6v6h-6z" fill="#e0e0e0" /></Art>
          </button>
          <Avatar>AM</Avatar>
        </Account>
      </DocBar>
      <Ribbon>
        <Workspace>DESIGN <Caret /></Workspace>
        <RibbonBody>
          <RibbonTabs>
            {["SOLID", "SURFACE", "SHEET METAL", "TOOLS"].map((t, i) => <RibbonTab key={t} $active={i === 0}>{t}</RibbonTab>)}
          </RibbonTabs>
          <Groups>
            {GROUPS.map((g) => (
              <Group key={g.name} $tight={g.tight}>
                <Tools>
                  {g.tools.map((t) => (
                    <Tool key={t.name} $on={t.on} aria-label={t.name}><Art box={[t.x, 237, 114, 114]}>{t.art}</Art></Tool>
                  ))}
                </Tools>
                <GroupMenu>{g.name}<Caret /></GroupMenu>
              </Group>
            ))}
          </Groups>
        </RibbonBody>
      </Ribbon>
      <Viewport>
        <Canvas><Model /></Canvas>
        <Column>
          <Dock>
            <DockFold aria-label="Collapse"><Art box={[27, 60, 33, 24]}><path d="M42 63v18l-14-9zM57 63v18l-14-9z" fill="#222" /></Art></DockFold>
            <DockTitle>BROWSER</DockTitle>
            <Dot sign="minus" />
            <Grip />
          </Dock>
          <BrowserTree />
          <Spacer />
          <Dock>
            <DockFold aria-label="Comments" />
            <DockTitle>COMMENTS</DockTitle>
            <Dot sign="plus" />
            <Grip />
          </Dock>
        </Column>
        <Navigation />
        <Column $end>
          <CubeSlot><ViewCube /></CubeSlot>
          <ExtrudePanel />
          <Spacer />
          <StatusText>2 Profiles | Min Distance : 462.00 mm</StatusText>
        </Column>
        <FloatingInput>
          <Stripes />
          <ValueShell>
            <ValueInput aria-label="Distance value" value={value} onChange={(e) => setValue(e.target.value)} />
            <TextCursor />
          </ValueShell>
          <Art box={[0, 0, 15, 45]}><circle cx="7" cy="8" r="5" fill="#888" /><circle cx="7" cy="23" r="5" fill="#888" /><circle cx="7" cy="38" r="5" fill="#888" /></Art>
        </FloatingInput>
      </Viewport>
      <Timeline>
        {PLAY.map(([label, d], i) => (
          <PlayButton key={label} aria-label={label}><Art box={[15 + i * 75, 171, 72, 54]}><path d={d} fill="#4a4a4c" /></Art></PlayButton>
        ))}
        <Feature aria-label="Sketch1">
          <Art box={[435, 150, 84, 102]}>
            <path d="M441 174h40v38h-40z" stroke="#777" strokeWidth="3" />
            <path d="M437 170h8v8h-8zM476 170h8v8h-8zM437 209h8v8h-8z" fill="#1b8ae6" />
            <path d="M461 219l3-10 14-14 8 8-15 13z" fill="#f5c04c" /><path d="M478 196l5-2 4 4-3 5z" fill="#e8424a" /><path d="M461 219l3-8 6 6z" fill="#444" />
            <path d="M462 228h6v21h-6z" fill="#c8c8c8" />
            <path d="M480 153h36v11l-12 15h-3v70h-6v-70h-3l-12-15z" fill="#666" />
          </Art>
        </Feature>
        <button aria-label="Timeline settings"><Gear /></button>
      </Timeline>
      <Edge />
    </Shell>
  );
}
